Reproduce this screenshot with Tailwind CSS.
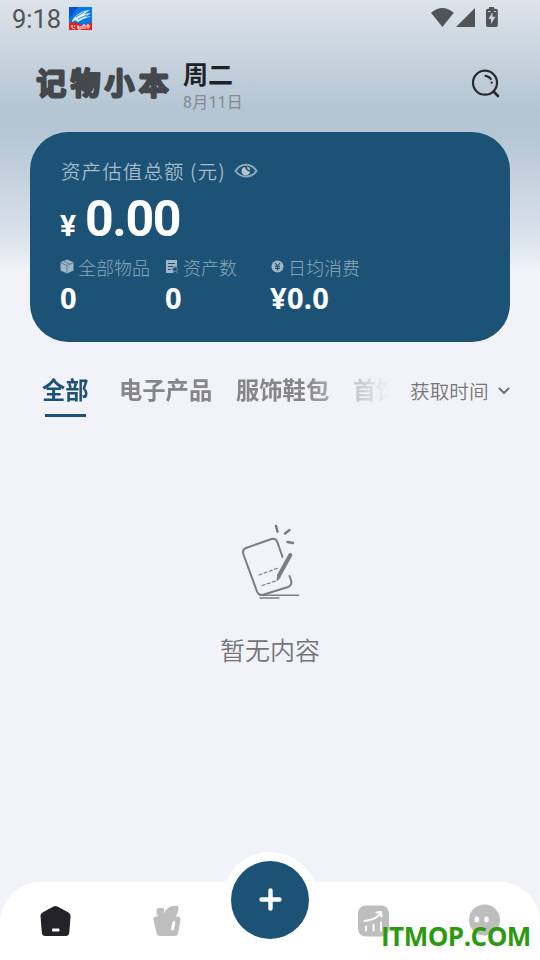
<!DOCTYPE html>
<html lang="zh-CN">
<head>
<meta charset="utf-8">
<meta name="viewport" content="width=device-width, initial-scale=1">
<title>记物小本</title>
<script src="https://cdn.jsdelivr.net/npm/@tailwindcss/browser@4"></script>
</head>
<body class="font-['Roboto','Noto_Sans_CJK_SC',sans-serif]">
<div class="relative flex h-[960px] w-[540px] flex-col overflow-hidden bg-[#f2f3f8]">
  <div class="absolute inset-x-0 top-0 h-[272px] bg-[linear-gradient(to_bottom,#dde3ea_0px,#b4c5d3_110px,#b5c6d4_135px,#dce3ec_240px,#f2f3f8_272px)]"></div>

  <!-- Status bar -->
  <div class="relative flex h-10 shrink-0 items-start pl-3">
    <span class="mt-[4px] w-[57px] text-[25.5px] leading-[30px] text-[#515457]">9:18</span>
    <svg class="mt-[7px]" width="23" height="23" viewBox="0 0 23 23">
      <rect width="23" height="23" fill="#0878ee"/><path d="M0 0H9L0 12Z" fill="#0b4fcb"/>
      <path d="M3 14C6 8 12 4 21 3L15 7L22 6L16 10L23 9L14 12L9 15L6 13L4 15Z" fill="#e9f5ff"/>
      <path d="M7 10L15 5M9 12L18 8" stroke="#168bf2"/>
      <path d="M0 16Q6 14 10 17T23 15V23H0Z" fill="#ea2112"/>
      <path d="M3 18V21L6 22M6 18L5 20M8 20H11M9 18V22H12V19M14 22V18H16V22M18 18H20V21H18Z" stroke="#fff" fill="none"/>
    </svg>
    <svg class="ml-[339px] mt-[7px]" width="68" height="21" viewBox="0 0 68 21" fill="#515457">
      <path d="M0 5.8Q11.4-4 22.8 5.8L11.4 20Z"/><path d="M44 1V20H25Z"/>
      <path d="M58 1.7V0h5v1.7h2q1.8 0 1.8 1.8V18q0 2-1.8 2h-8q-2 0-2-2V3.500q0-1.800 2-1.800Z"/>
      <path d="M61.500 5L57.500 12H60V17L64.500 9.800H61.500Z" fill="#c8d3dc"/><path d="M57 4.500h2.500M63 4.500h2" stroke="#c8d3dc"/>
    </svg>
  </div>

  <!-- Header -->
  <header class="relative flex h-[92px] shrink-0 items-start pl-[36px]">
    <h1 class="mt-[22px] h-[42px] w-[147px]">
      <svg width="140" height="42" viewBox="0 0 140 42" class="overflow-visible fill-[#44474b] stroke-[#44474b] stroke-[3px] font-['Noto_Sans_CJK_SC',sans-serif] text-[29.500px] font-medium [stroke-linejoin:round] [stroke-linecap:round]"><text x="0.500" y="32" textLength="132" lengthAdjust="spacing">记物小本</text></svg>
    </h1>
    <div class="w-[288px]">
      <p class="mt-[21px] text-[25px] font-bold leading-[30px] text-[#202126]">周二</p>
      <p class="mt-[1px] text-[16px] leading-[22px] tracking-[0.200px] text-[#838a90]">8月11日</p>
    </div>
    <svg class="mt-[29px]" width="30" height="30" viewBox="0 0 30 30" fill="none" stroke="#27292d" stroke-linecap="round">
      <circle cx="14" cy="13.700" r="12" stroke-width="2.200"/><path d="M22.500 22.500L27 27" stroke-width="2.600"/>
      <path d="M14.500 6.800Q18 7.200 19.700 10M20.700 13.500v.2" stroke-width="2.200"/>
    </svg>
  </header>

  <!-- Asset summary -->
  <section class="relative mx-[30px] flex h-[210px] shrink-0 flex-col rounded-[38px] bg-[#1b5275] pl-[30px] text-white">
    <div class="mt-[24px] flex h-[30px] items-center">
      <span class="w-[174px] whitespace-nowrap pl-px font-['Noto_Sans_CJK_SC',sans-serif] text-[19.500px] font-[350] leading-[30px] tracking-[1.100px] text-[#a6bbc9]">资产估值总额 (元)</span>
      <svg width="24" height="18" viewBox="0 0 24 18" fill="none"><path d="M1.500 9C6.500.8 17.500.8 22.500 9C17.500 16.200 6.500 16.200 1.500 9Z" stroke="#8fa9ba" stroke-width="2"/><path d="M11 5A4.200 4.200 0 1 0 16 9.500Q12 9.300 11 5Z" fill="#b3c5d1"/><path d="M13 4.500Q16 5 16.200 8Q13 8 13 4.500Z" fill="#b3c5d1"/></svg>
    </div>
    <div class="mt-[3px] flex h-[60px] items-baseline font-bold leading-[60px]"><span class="w-[25px] text-[30px]">¥</span><span class="text-[50px] tracking-[-1.400px]">0.00</span></div>
    <div class="mt-[5px] flex">
      <div class="w-[105px]">
        <div class="flex h-[27px] items-center"><svg class="mb-[2px] mr-[4px] shrink-0" width="14" height="15" viewBox="0 0 14 15"><path d="M7 .5L13.500 3.300V11.500L7 14.500L.5 11.500V3.300Z" fill="#a0b6c5"/><path d="M1 4L7 6.500L13 4M7 6.500V14M4 2.500L10 5" stroke="#4f7894" stroke-width=".9" fill="none"/></svg><span class="whitespace-nowrap font-['Noto_Sans_CJK_SC',sans-serif] text-[18px] font-light text-[#8da9ba]">全部物品</span></div>
        <p class="font-['Noto_Sans','Open_Sans',sans-serif] text-[29px] font-bold leading-[34px]">0</p>
      </div>
      <div class="w-[105px]">
        <div class="flex h-[27px] items-center"><svg class="mb-[2px] mr-[4px] shrink-0" width="14" height="15" viewBox="0 0 14 15"><path d="M1 1H12V8L8 9V14H1Z" fill="#a0b6c5"/><path d="M3 4.500H10M3 7.500H8M3 10.500H6" stroke="#1b5275"/><circle cx="10" cy="10" r="2.500" fill="none" stroke="#668ba2"/><path d="M8 14L9 12M10.500 12L13 14.500" stroke="#668ba2"/></svg><span class="whitespace-nowrap font-['Noto_Sans_CJK_SC',sans-serif] text-[18px] font-light text-[#8da9ba]">资产数</span></div>
        <p class="font-['Noto_Sans','Open_Sans',sans-serif] text-[29px] font-bold leading-[34px]">0</p>
      </div>
      <div>
        <div class="flex h-[27px] items-center"><svg class="mb-[2px] mr-[4px] shrink-0" width="14" height="15" viewBox="0 0 14 15"><circle cx="7.500" cy="7.500" r="6" fill="#a0b6c5"/><path d="M5 4L7.500 7L10 4M7.500 7V11.500M5 7.200H10M5 9.400H10" stroke="#1b5275" fill="none" stroke-width="1.100"/></svg><span class="whitespace-nowrap font-['Noto_Sans_CJK_SC',sans-serif] text-[18px] font-light text-[#8da9ba]">日均消费</span></div>
        <p class="font-['Noto_Sans','Open_Sans',sans-serif] text-[29px] font-bold leading-[34px] tracking-[0.300px]">¥0.0</p>
      </div>
    </div>
  </section>

  <!-- Category tabs -->
  <nav class="flex h-[78px] shrink-0 items-start pl-[42px] pt-[31px]">
    <div class="flex w-[350px] overflow-hidden whitespace-nowrap text-[23.300px] font-bold leading-[36px] text-[#868686] [mask-image:linear-gradient(to_right,black_262px,transparent_348px)]">
      <div class="w-[77px] shrink-0 text-[#1b5275]"><span>全部</span><div class="ml-[3px] mt-[5px] h-[3px] w-[41px] bg-[#1b5275]"></div></div>
      <span class="w-[117px] shrink-0">电子产品</span><span class="w-[117px] shrink-0">服饰鞋包</span><span>首饰</span>
    </div>
    <div class="ml-[18px] flex h-[35px] items-center font-['Noto_Sans_CJK_SC',sans-serif] text-[19.700px] font-[350] text-[#777]"><span class="w-[87px]">获取时间</span><svg width="14" height="10" viewBox="0 0 14 10" fill="none" stroke="#717171" stroke-width="2"><path d="M2 2L7 7L12 2"/></svg></div>
  </nav>

  <!-- Empty state -->
  <main class="flex flex-1 flex-col items-center pt-[102px]">
    <svg width="64" height="80" viewBox="238 522 64 80" fill="none" stroke="#7b7d80" stroke-linecap="round" stroke-linejoin="round" stroke-width="2">
      <path d="M282.500 557L277.500 542.500Q276 538 271.500 539L246 548Q242 549.500 243.300 554L257 591.500Q259 596.500 264 594.500L288 587Q292 585.500 291.300 581L289.500 576"/>
      <path d="M260 595.300H298.500M260 598H279" stroke-width="1.400"/>
      <path d="M259 575L278 568M262 585.500L277 580.500" stroke-width="1.200" stroke-dasharray="3 2.500"/>
      <path d="M290.300 555L279 575.500" stroke-width="4"/><path d="M278 574.500L277.300 580L280 577" stroke-width="1.500"/>
      <path d="M276 526L277.500 531.500M285 533.500L289.500 530M287.500 542L293 543" stroke-width="2.500"/>
    </svg>
    <p class="mt-[29px] font-['Noto_Sans_CJK_SC',sans-serif] text-[25px] font-[350] leading-[36px] text-[#747578]">暂无内容</p>
  </main>

  <!-- Bottom navigation -->
  <footer class="relative flex h-[78px] shrink-0 rounded-t-[40px] bg-white">
    <svg class="ml-[40px] mt-[23px]" width="31" height="32" viewBox="0 0 31 32"><path d="M13.500 1.500Q15.500.4 17.500 1.500L28.500 7.500Q30.800 9 30.600 11L29.300 27.500Q29 31 25.500 31H5.500Q2 31 1.800 27.500L.5 11Q.3 8.800 2.500 7.500Z" fill="#232228"/><rect x="12" y="23.500" width="7.500" height="3" rx="1" fill="#fff"/></svg>
    <svg class="ml-[82px] mt-[23px]" width="28" height="32" viewBox="0 0 28 32"><path d="M.3 14Q0 12 2.500 11.500L5 11Q3.500 9.500 3.500 7V5Q3.500 3 5.500 3H10Q11.500 3.500 11 6L10.500 9Q13.500 1.500 21.500 .700L24.500.8Q26 1 25.500 3C25.500 7 24 9.500 22.500 11.500H25Q27.800 12 27.500 15L25 28.500Q24.500 31 21.500 31H7Q4 31 3.500 28Z" fill="#bebebe"/><path d="M19.300 18Q19.700 16 21.500 16Q22.500 16 22.200 18L21 25Q18.500 26 18 24Z" fill="#fff"/></svg>
    <svg class="ml-[177px] mt-[23px]" width="31" height="32" viewBox="0 0 31 32"><rect width="31" height="31" x="0" y=".5" rx="7.500" fill="#bebebe"/><g fill="none" stroke="#fff" stroke-linecap="round" stroke-linejoin="round"><path d="M6.500 16C13.500 15.500 19 13.500 22.500 8M18.500 7.500L23 7L23.500 11.500" stroke-width="2"/><path d="M8 21.500V25.500M15.500 20V25.500M23 17.500V25.500" stroke-width="2"/></g></svg>
    <svg class="ml-[79px] mt-[22px]" width="33" height="33" viewBox="0 0 33 33"><circle cx="16.500" cy="16" r="15.500" fill="#bebebe"/><ellipse cx="8.700" cy="15.500" rx="2.300" ry="3" fill="#fff"/><ellipse cx="18.500" cy="15.500" rx="2.300" ry="3" fill="#fff"/></svg>
    <div class="absolute left-[222px] top-[-30px] flex size-[96px] items-center justify-center rounded-full bg-white">
      <div class="flex size-[78px] items-center justify-center rounded-full bg-[#1b5275]"><svg width="24" height="24" viewBox="0 0 24 24" fill="none" stroke="#fff" stroke-width="4.400" stroke-linecap="round"><path d="M12.500 2.500V20.500M3.500 11.500H21.500"/></svg></div>
    </div>
    <span class="absolute left-[381px] top-[36px] whitespace-nowrap font-['Open_Sans','Noto_Sans',sans-serif] text-[26px] font-bold leading-[36px] tracking-[-0.500px] text-[#2c9910]">ITMOP.COM</span>
  </footer>
</div>
</body>
</html>
